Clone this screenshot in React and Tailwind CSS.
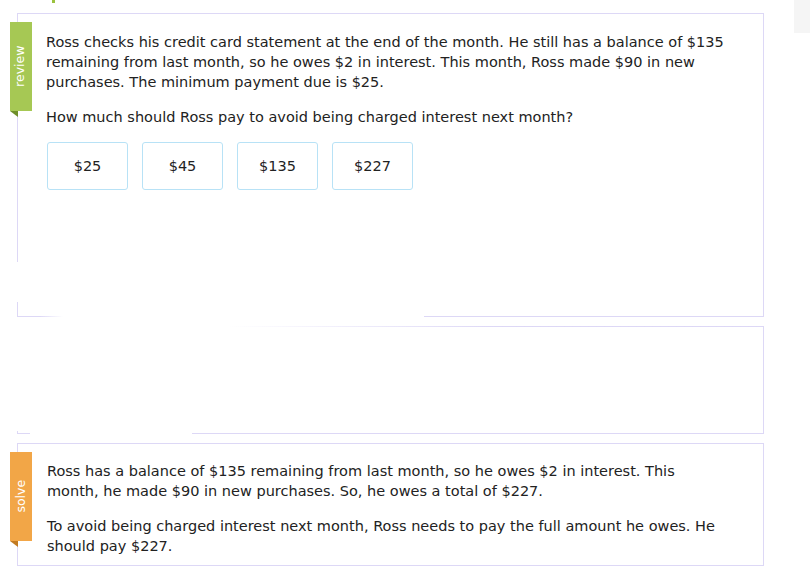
import React from "react";

const B = "bg-[#ddd8f6]";

function Ribbon({ label, color, fold, left }) {
  return (
    <div className={`absolute ${left} top-[8px] w-[22px]`}>
      <div className={`h-[89px] w-[22px] ${color} flex items-center justify-center`}>
        <span className="text-white text-[12.5px] leading-none -rotate-90 whitespace-nowrap">
          {label}
        </span>
      </div>
      <svg width="8" height="6" className="block">
        <polygon points="0,0 8,0 8,6" fill={fold} />
      </svg>
    </div>
  );
}

function Choice({ children }) {
  return (
    <div className="w-[81px] h-[48px] border border-[#b8e2f6] rounded-[3px] flex items-center justify-center text-[14.5px] text-[#222]">
      {children}
    </div>
  );
}

export default function App() {
  return (
    <div
      className="relative w-[810px] h-[572px] bg-white overflow-hidden text-[#222]"
      style={{ fontFamily: '"DejaVu Sans", Verdana, sans-serif' }}
    >
      <div className="absolute left-[52px] top-0 w-[3px] h-[3px] bg-[#9bc23f]" />
      <div className="absolute left-[794px] top-0 w-[16px] h-[33px] bg-[#f5f5f5]" />

      <div className="pl-[17px] pt-[13px] w-[764px] flex flex-col gap-[9px]">
        {/* review card */}
        <div className="relative h-[304px] border-t border-r border-[#ddd8f6]">
          <div className={`absolute left-0 top-0 w-px h-[248px] ${B}`} />
          <div className={`absolute left-0 top-[288px] w-px h-[15px] ${B}`} />
          <div className="absolute left-0 bottom-0 w-[46px] h-px bg-gradient-to-r from-[#ddd8f6] via-[#ddd8f6] to-transparent" />
          <div className={`absolute left-[407px] right-0 bottom-0 h-px ${B}`} />
          <Ribbon label="review" color="bg-[#a6c854]" fold="#6f8f2a" left="left-[-7px]" />
          <div className="pl-[29px] pr-[10px] pt-[18px] text-[14.5px] leading-[20px]">
            <p>
              Ross checks his credit card statement at the end of the month. He still has a balance of $135
              <br />
              remaining from last month, so he owes $2 in interest. This month, Ross made $90 in new
              <br />
              purchases. The minimum payment due is $25.
            </p>
            <p className="mt-[15px]">How much should Ross pay to avoid being charged interest next month?</p>
            <div className="mt-[15px] flex gap-[14px] pl-px">
              <Choice>$25</Choice>
              <Choice>$45</Choice>
              <Choice>$135</Choice>
              <Choice>$227</Choice>
            </div>
          </div>
        </div>

        {/* empty card */}
        <div className="relative h-[108px] border-r border-[#ddd8f6]">
          <div className="absolute left-[211px] right-0 top-0 h-px bg-gradient-to-r from-transparent via-[#ddd8f6] to-[#ddd8f6]" />
          <div className={`absolute left-0 bottom-0 w-[13px] h-px ${B}`} />
          <div className={`absolute left-0 bottom-0 w-px h-[3px] ${B}`} />
          <div className={`absolute left-[175px] right-0 bottom-0 h-px ${B}`} />
        </div>

        {/* solve card */}
        <div className="relative h-[123px] border border-[#ddd8f6]">
          <Ribbon label="solve" color="bg-[#f2a647]" fold="#c27b22" left="left-[-8px]" />
          <div className="pl-[29px] pr-[10px] pt-[17px] text-[14.5px] leading-[20px]">
            <p>
              Ross has a balance of $135 remaining from last month, so he owes $2 in interest. This
              <br />
              month, he made $90 in new purchases. So, he owes a total of $227.
            </p>
            <p className="mt-[15px]">
              To avoid being charged interest next month, Ross needs to pay the full amount he owes. He
              <br />
              should pay $227.
            </p>
          </div>
        </div>
      </div>
    </div>
  );
}
